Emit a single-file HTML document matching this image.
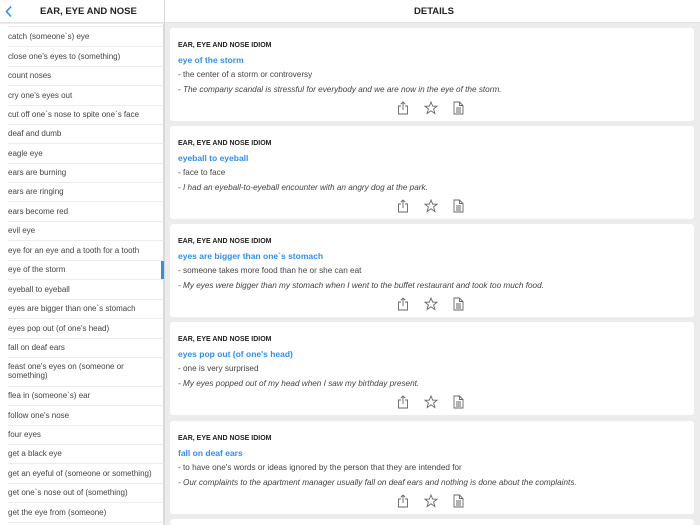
<!DOCTYPE html>
<html><head><meta charset="utf-8"><style>
*{margin:0;padding:0;box-sizing:border-box}
html,body{width:700px;height:525px;overflow:hidden}
body{background:#ececec;font-family:"Liberation Sans",sans-serif;position:relative}
.hdr{position:absolute;top:0;left:0;width:700px;height:23px;background:#fff;border-bottom:1px solid #e2e2e2}
.hdr .t{position:absolute;top:6px;font-size:9.5px;font-weight:bold;color:#222}
.left{position:absolute;top:24px;left:0;width:164px;height:501px;background:#fff;border-right:1px solid #d8d8d8}
.vline{position:absolute;left:164px;top:0;width:1px;height:525px;background:#d8d8d8}
.row{position:absolute;left:8px;width:156px;font-size:8px;color:#444;line-height:9.5px}
.sep{position:absolute;left:8px;width:156px;height:1px;background:#ececec}
.card{position:absolute;left:170px;width:524px;height:93px;background:#fff;border-radius:3px}
.card .lb{position:absolute;left:8px;top:13.5px;font-size:7px;font-weight:bold;color:#222}
.card .ti{position:absolute;left:8px;top:26.5px;font-size:8.5px;font-weight:bold;color:#2f8ff0}
.card .df{position:absolute;left:8px;top:41.5px;font-size:8.2px;color:#444}
.card .ex{position:absolute;left:8px;top:56.5px;font-size:8.2px;color:#444;font-style:italic}
.card svg{position:absolute;top:73px}
</style></head><body>
<div class="hdr">
<svg style="position:absolute;left:4px;top:5px" width="10" height="13" viewBox="0 0 10 13"><path d="M7 1.5L2.5 6.5L7 11.5" stroke="#2f8ff0" stroke-width="1.6" fill="none"/></svg>
<div class="t" style="left:40px">EAR, EYE AND NOSE</div>
<div class="t" style="left:414px">DETAILS</div>
</div>
<div class="left"></div>
<div class="vline"></div>
<div style="position:absolute;left:161px;top:260px;width:3px;height:19px;background:#2f8ff0"></div>
<div id="list"></div>
<div id="cards"></div>
<script>
var items=[["catch (someone`s) eye",36],["close one's eyes to (something)",56],["count noses",75],["cry one's eyes out",95],["cut off one`s nose to spite one`s face",114],["deaf and dumb",133],["eagle eye",153],["ears are burning",172],["ears are ringing",191],["ears become red",211],["evil eye",230],["eye for an eye and a tooth for a tooth",250],["eye of the storm",269],["eyeball to eyeball",289],["eyes are bigger than one`s stomach",308],["eyes pop out (of one's head)",328],["fall on deaf ears",347],["feast one's eyes on (someone or<br>something)",366],["flea in (someone`s) ear",395],["follow one's nose",415],["four eyes",434],["get a black eye",453],["get an eyeful of (someone or something)",473],["get one`s nose out of (something)",492],["get the eye from (someone)",512]];
var h="";
items.forEach(function(it,i){h+='<div class="row" style="top:'+(it[1]-4.5)+'px">'+it[0]+'</div>';
var y=(i==17)?it[1]+19.5:it[1]+10;h+='<div class="sep" style="top:'+y+'px"></div>';});
h+='<div class="sep" style="top:26px"></div>';
document.getElementById("list").innerHTML=h;
var cards=[["eye of the storm","the center of a storm or controversy","The company scandal is stressful for everybody and we are now in the eye of the storm."],["eyeball to eyeball","face to face","I had an eyeball-to-eyeball encounter with an angry dog at the park."],["eyes are bigger than one`s stomach","someone takes more food than he or she can eat","My eyes were bigger than my stomach when I went to the buffet restaurant and took too much food."],["eyes pop out (of one's head)","one is very surprised","My eyes popped out of my head when I saw my birthday present."],["fall on deaf ears","to have one's words or ideas ignored by the person that they are intended for","Our complaints to the apartment manager usually fall on deaf ears and nothing is done about the complaints."]];
var tops=[28,126,224,322,421];
var icons='<svg style="left:227px" width="12" height="14" viewBox="0 0 12 14"><path d="M4 5H1.5V13H10.5V5H8M6 9V1M3.8 3.2L6 1L8.2 3.2" stroke="#666" stroke-width="0.9" fill="none"/></svg><svg style="left:254px" width="14" height="14" viewBox="0 0 14 14"><path d="M7 1L8.7 5.2H13L9.6 7.9L10.9 12.5L7 9.8L3.1 12.5L4.4 7.9L1 5.2H5.3Z" stroke="#666" stroke-width="0.9" fill="none"/></svg><svg style="left:283px" width="11" height="14" viewBox="0 0 11 14"><path d="M1 1H6.5L10 4.5V13H1ZM6.5 1V4.5H10M3 7H8M3 9H8M3 11H8" stroke="#666" stroke-width="0.9" fill="none"/></svg>';
var c="";
cards.forEach(function(k,i){c+='<div class="card" style="top:'+tops[i]+'px"><div class="lb">EAR, EYE AND NOSE IDIOM</div><div class="ti">'+k[0]+'</div><div class="df">- '+k[1]+'</div><div class="ex">- '+k[2]+'</div>'+icons+'</div>';});
c+='<div class="card" style="top:519px;height:6px"></div>';
document.getElementById("cards").innerHTML=c;
</script>
</body></html>
